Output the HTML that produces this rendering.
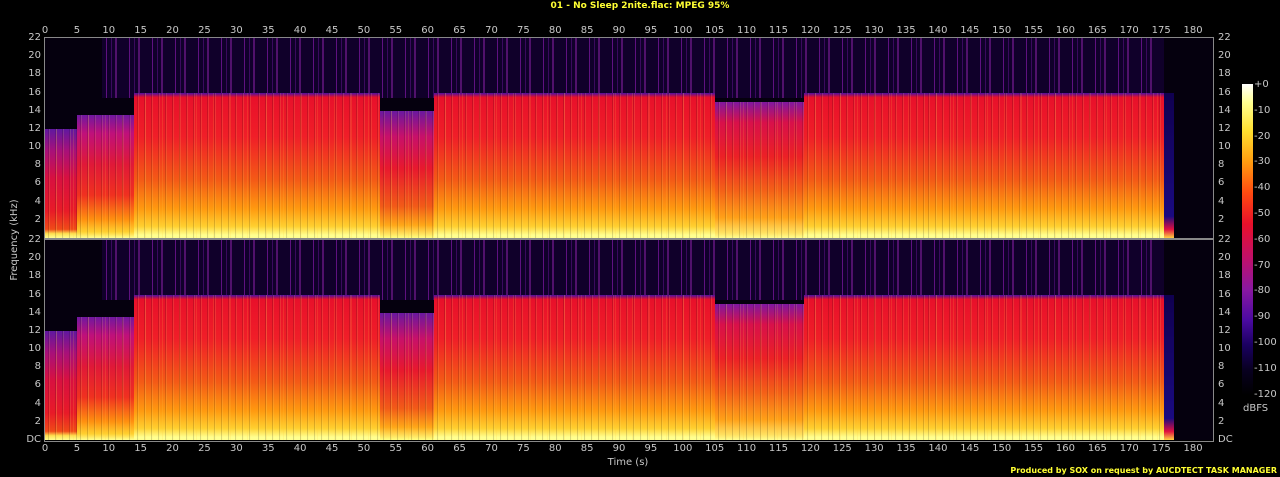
<!DOCTYPE html>
<html><head><meta charset="utf-8"><style>
*{margin:0;padding:0;box-sizing:border-box}
body{width:1280px;height:477px;background:#000;position:relative;overflow:hidden;font-family:"DejaVu Sans","Liberation Sans",sans-serif;font-size:10px;color:#c8c8c8}
.a{position:absolute}
.t{position:absolute;white-space:nowrap;line-height:10px}
.ch{position:absolute;left:45px;width:1168px;height:200px;background:#05000e;overflow:hidden}
.seg{position:absolute;bottom:0}
.str{position:absolute;inset:0;background:repeating-linear-gradient(90deg,rgba(0,0,0,0) 0 3px,rgba(0,0,0,.15) 3px 4px,rgba(255,230,120,.14) 4px 5px,rgba(0,0,0,0) 5px 7px),repeating-linear-gradient(90deg,rgba(0,0,0,0) 0 11px,rgba(255,200,60,.15) 11px 12px,rgba(0,0,0,0) 12px 17px)}
.top{position:absolute;top:0;background:repeating-linear-gradient(90deg,rgba(150,30,190,0) 0 4px,rgba(150,30,190,.7) 4px 5px,rgba(0,0,0,0) 5px 9px,rgba(110,20,160,.55) 9px 10px,rgba(0,0,0,0) 10px 13px,rgba(170,40,200,.5) 13px 15px,rgba(0,0,0,0) 15px 23px),#120030}
</style></head><body>
<div class="t" style="left:0;width:1280px;text-align:center;top:1px;color:#ffff33;font-weight:bold;font-size:9px">01 - No Sleep 2nite.flac: MPEG 95%</div>
<div class="a" style="left:44px;top:37px;width:1170px;height:405px;border:1px solid #888"></div>
<div id="c1" class="ch" style="top:38px"></div>
<div id="c2" class="ch" style="top:240px"></div>
<div class="a" style="left:45px;top:238px;width:1168px;height:2px;background:#888"></div>
<div class="t" style="left:-35px;top:235px;width:100px;text-align:center;transform:rotate(-90deg)">Frequency (kHz)</div>
<div class="t" style="left:598px;top:458px;width:60px;text-align:center">Time (s)</div>
<div class="a" style="left:1242px;top:84px;width:11px;height:311px;background:linear-gradient(#fff 0%,#ffff90 6%,#ffe030 15%,#ff9c10 25%,#ff4a10 35%,#e8102a 45%,#c0106a 56%,#8a18a0 66%,#4a0aa0 76%,#1a0060 84%,#080020 92%,#000 100%)"></div>
<div class="t" style="left:1243px;top:404px">dBFS</div>
<div class="t" style="right:3px;top:466px;color:#ffff33;font-weight:bold;font-size:8px">Produced by SOX on request by AUCDTECT TASK MANAGER</div>
<div id="lab"></div>
<script>
var L=document.getElementById('lab'),h='';
function sx(s){return 45+s*6.378}
for(var s=0;s<=180;s+=5){var x=sx(s);
h+='<div class="t" style="left:'+(x-15)+'px;width:30px;text-align:center;top:26px">'+s+'</div>';
h+='<div class="t" style="left:'+(x-15)+'px;width:30px;text-align:center;top:444px">'+s+'</div>';}
for(var c=0;c<2;c++){var y0=c?240:38;
for(var k=0;k<=22;k+=2){var y=y0+200-k*9.09;var lb=k==0?(c?'DC':''):k;if(k==0&&!c)continue;
h+='<div class="t" style="left:10px;width:31px;text-align:right;top:'+(y-5)+'px">'+lb+'</div>';
h+='<div class="t" style="left:1218px;top:'+(y-5)+'px">'+lb+'</div>';}}
for(var d=0;d<=12;d++){var y=84+d*25.8;h+='<div class="t" style="left:1254px;top:'+(y-4)+'px">'+(d?'-'+d*10:'+0')+'</div>';}
L.innerHTML=h;
var G={
a:'linear-gradient(#6018a0,#a8107a 20%,#d81040 45%,#e81a28 75%,#f04a18 92%,#ffe050 96%,#ffff90)',
b:'linear-gradient(#7018a0,#c0107a 15%,#e01838 40%,#f03020 65%,#ff9010 85%,#ffd030 95%,#ffff90)',
d:'linear-gradient(#6a18a0,#c8106a 20%,#e8182e 45%,#f25a18 75%,#ffa818 90%,#ffff80)',
m:'linear-gradient(#5010a0 0,#e8102a 3%,#f01e28 30%,#f45a16 60%,#ff9a10 80%,#ffd030 92%,#ffff90 98%)',
w:'linear-gradient(#8018a0,#d8104a 15%,#ec2026 40%,#f46018 65%,#ffa018 85%,#ffe060 96%,#ffff90)'};
var segs=[[0,5,12,'a'],[5,14,13.5,'b'],[14,33,16,'m'],[33,52.5,16,'m'],[52.5,61,14,'d'],[61,105,16,'m'],[105,119,15,'w'],[119,123,16,'m'],[123,138,16,'m'],[138,175.5,16,'m']];
['c1','c2'].forEach(function(id){var e=document.getElementById(id),g='';
g+='<div class="top" style="left:'+(sx(9)-45)+'px;width:'+(sx(175.5)-sx(9))+'px;height:60px;opacity:.85"></div>';
segs.forEach(function(q){var l=sx(q[0])-45,w=sx(q[1])-sx(q[0]),hh=q[2]*9.09;
g+='<div class="seg" style="left:'+l+'px;width:'+w+'px;height:'+hh+'px;background:'+G[q[3]]+'"><div class="str"></div></div>';});
g+='<div class="seg" style="left:'+(sx(175.5)-45)+'px;width:10px;height:145px;background:linear-gradient(#100050,#1a0a80 85%,#e01040 94%,#ffd040)"></div>';
e.innerHTML=g;});
</script>
</body></html>
